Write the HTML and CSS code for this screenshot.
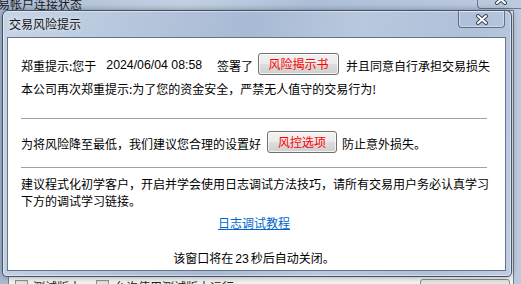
FILE: index.html
```html
<!DOCTYPE html>
<html lang="zh-CN">
<head>
<meta charset="utf-8">
<title>交易风险提示</title>
<link rel="stylesheet" href="styles.css">
</head>
<body>
<div class="bgwin">
  <div class="bg-title">
    <span class="bg-title-text">易帐户连接状态</span>
    <div class="bg-close">
      <svg width="14" height="11" viewBox="0 0 14 11"><path d="M3 2 L11 9 M11 2 L3 9" stroke="#3a4759" stroke-width="4" stroke-linecap="round"/><path d="M3 2 L11 9 M11 2 L3 9" stroke="#fff" stroke-width="2" stroke-linecap="round"/></svg>
    </div>
  </div>
  <div class="bg-client">
    <span class="cb"></span><span class="cb-label">测试版本</span>
    <span class="cb cb2"></span><span class="cb-label">允许使用测试版本运行</span>
    <span class="bg-btn"></span>
  </div>
</div>

<div class="dialog">
  <div class="titlebar">
    <span class="title">交易风险提示</span>
    <div class="close">
      <svg width="14" height="11" viewBox="0 0 14 11"><path d="M3 2 L11 9 M11 2 L3 9" stroke="#3a4759" stroke-width="4" stroke-linecap="round"/><path d="M3 2 L11 9 M11 2 L3 9" stroke="#fff" stroke-width="2" stroke-linecap="round"/></svg>
    </div>
  </div>
  <div class="client">
    <div class="row r1">
      <span class="txt">郑重提示:您于</span>
      <span class="num date">2024/06/04 08:58</span>
      <span class="txt signed">签署了</span>
      <button class="btn btn1">风险揭示书</button>
      <span class="txt after1">并且同意自行承担交易损失</span>
    </div>
    <div class="line r2">本公司再次郑重提示:为了您的资金安全，严禁无人值守的交易行为!</div>
    <div class="sep sep1"></div>
    <div class="row r3">
      <span class="txt">为将风险降至最低，我们建议您合理的设置好</span>
      <button class="btn btn2">风控选项</button>
      <span class="txt after2">防止意外损失。</span>
    </div>
    <div class="sep sep2"></div>
    <p class="para">建议程式化初学客户，开启并学会使用日志调试方法技巧，请所有交易用户务必认真学习下方的调试学习链接。</p>
    <div class="line center link-row"><a href="#" class="link">日志调试教程</a></div>
    <div class="line center countdown">该窗口将在<span class="num secs">23</span>秒后自动关闭。</div>
  </div>
</div>
</body>
</html>
```

FILE: styles.css
```css
* { box-sizing: border-box; }
html, body { margin: 0; padding: 0; }
body {
  width: 521px;
  height: 284px;
  overflow: hidden;
  position: relative;
  font-family: "Noto Sans CJK SC", "Noto Sans", sans-serif;
  font-size: 12px;
  color: #000;
  background: #b9c8dc;
}

/* background window */
.bgwin {
  height: 284px;
  display: flex;
  flex-direction: column;
  background: linear-gradient(90deg, #a9bbd3 0%, #c3d0e2 35%, #adbfd8 60%, #bccadf 100%);
}
.bg-title {
  height: 10px;
  flex: none;
  display: flex;
  align-items: flex-end;
  overflow: hidden;
}
.bg-title-text {
  line-height: 17px;
  margin: 0 0 -2px -2px;
  color: #1b1b1b;
}
.bg-close {
  margin-left: auto;
  margin-right: -3px;
  align-self: flex-start;
  width: 47px;
  height: 9px;
  border: 1px solid rgba(40, 55, 80, .55);
  border-top: 0;
  border-radius: 0 0 0 4px;
  display: flex;
  justify-content: center;
  align-items: flex-start;
  overflow: hidden;
}
.bg-close svg { margin-top: -6px; }
.bg-client {
  flex: 1;
  margin: 0 7px 0 8px;
  background: #f2f2f2;
  border: 1px solid #6f7f95;
  border-bottom: 0;
  padding: 268px 3px 0 6px;
  display: flex;
  align-items: flex-start;
}
.cb {
  width: 13px;
  height: 13px;
  margin-top: 1px;
  border: 1px solid #8e8f8f;
  background: linear-gradient(#dcdcdc, #fff);
}
.cb2 { margin-left: 15px; }
.cb-label { margin-left: 5px; line-height: 15px; color: #222; white-space: nowrap; }
.bg-btn {
  margin-left: auto;
  width: 90px;
  height: 14px;
  border: 1px solid #8a8a8a;
  border-radius: 3px;
  background: #e4e4e4;
}

/* dialog */
.dialog {
  position: absolute;
  left: 2px;
  top: 10px;
  width: 510px;
  height: 267px;
  display: flex;
  flex-direction: column;
  border: 1px solid rgba(28, 42, 64, .75);
  border-radius: 6px 6px 5px 5px;
  background: linear-gradient(100deg, #c7d4e6 0%, #b8c7dd 22%, #a8bad4 45%, #b9c8de 65%, #afc0d9 85%, #bfcde1 100%);
  box-shadow: inset 0 0 0 1px rgba(255, 255, 255, .45), 0 0 6px rgba(0, 0, 0, .35);
}
.titlebar {
  height: 26px;
  flex: none;
  display: flex;
  align-items: flex-start;
}
.title {
  margin: 4px 0 0 6px;
  line-height: 17px;
  color: #151515;
  text-shadow: 0 0 5px rgba(255, 255, 255, .9);
}
.close {
  margin-left: auto;
  margin-right: 6px;
  width: 47px;
  height: 17px;
  border: 1px solid rgba(40, 55, 80, .6);
  border-top: 0;
  border-radius: 0 0 4px 4px;
  box-shadow: inset 0 0 0 1px rgba(255, 255, 255, .35);
  display: flex;
  justify-content: center;
  align-items: center;
}

.client {
  flex: 1;
  margin: 0 5px 5px 4px;
  background: #fff;
  border: 1px solid #62748e;
  padding: 15px 18px 0 13px;
  display: flex;
  flex-direction: column;
}
.row {
  display: flex;
  align-items: center;
  height: 22px;
  flex: none;
}
.txt { padding-top: 3px; line-height: 17px; white-space: nowrap; }
.num {
  font-family: "Liberation Sans", Arial, sans-serif;
  font-size: 12.3px;
  white-space: nowrap;
}
.date { margin-left: 10px; padding-top: 2px; flex: none; }
.signed { margin-left: 15px; }
.btn {
  flex: none;
  height: 22px;
  padding: 0;
  border: 1px solid #707070;
  border-radius: 3px;
  background: linear-gradient(#f2f2f2 0%, #ebebeb 48%, #dddddd 52%, #cfcfcf 100%);
  box-shadow: inset 0 0 0 1px rgba(255, 255, 255, .7);
  color: #ff0000;
  font-family: "Noto Sans CJK SC", sans-serif;
  font-size: 12px;
  line-height: 20px;
}
.btn1 { width: 81px; margin-left: 5px; }
.after1 { margin-left: 7px; }
.btn2 { width: 70px; margin-left: 6px; }
.after2 { margin-left: 5px; }

.line { line-height: 17px; flex: none; }
.r2 { margin-top: 5px; white-space: nowrap; }
.sep { height: 1px; background: #a0a0a0; flex: none; }
.sep1 { margin-top: 21px; }
.r3 { margin-top: 12px; }
.sep2 { margin-top: 14px; }
.para { margin: 7px -4px 0 0; line-height: 17px; }
.center { text-align: center; }
.link-row { margin-top: 5px; }
.link { color: #0066cc; text-decoration: underline; }
.countdown { margin-top: 18px; }
.secs { margin: 0 2px; }
```
